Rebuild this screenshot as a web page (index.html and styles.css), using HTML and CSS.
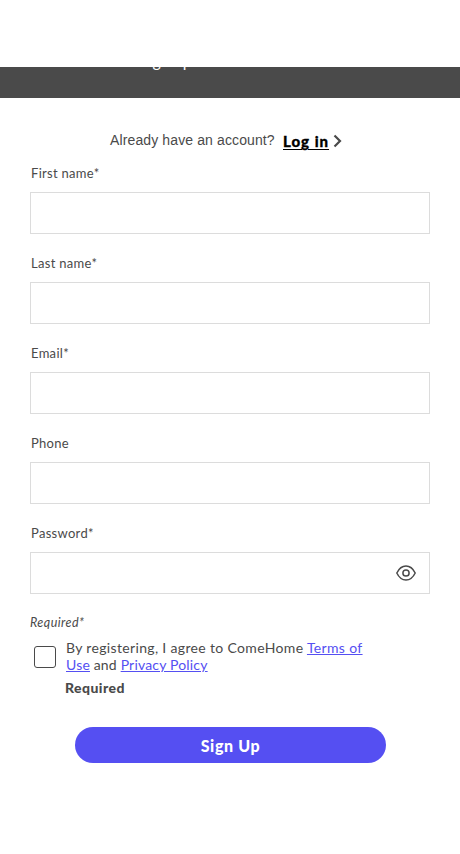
FILE: index.html
```html
<!DOCTYPE html>
<html lang="en">
<head>
<meta charset="utf-8">
<title>Sign Up</title>
<link rel="stylesheet" href="styles.css">
</head>
<body>
<header class="banner"><span class="banner-text">Sign up</span></header>
<main class="page">
  <p class="login"><span class="prompt">Already have an account?</span><a class="login-link" href="#">Log in</a><svg class="chevron" width="9" height="14" viewBox="0 0 9 14"><path d="M1.500 1.500 7 7l-5.500 5.500"/></svg></p>
  <form>
    <div class="field"><label for="first">First name*</label><input id="first" type="text"></div>
    <div class="field"><label for="last">Last name*</label><input id="last" type="text"></div>
    <div class="field"><label for="email">Email*</label><input id="email" type="email"></div>
    <div class="field"><label for="phone">Phone</label><input id="phone" type="tel"></div>
    <div class="field"><label for="password">Password*</label>
      <div class="password"><input id="password" type="password"><svg class="eye" width="20" height="16" viewBox="0 0 20 16"><path d="M.8 8C3 3.500 6.200 1 10 1s7 2.500 9.200 7C17 12.500 13.800 15 10 15S3 12.500.8 8Z"/><circle cx="10" cy="8" r="3.100"/></svg></div>
    </div>
    <p class="note">Required*</p>
    <div class="consent">
      <input class="check" type="checkbox" aria-label="Agree">
      <div class="terms"><div class="line-one">By registering, I agree to ComeHome <a href="#">Terms of</a></div><div class="line-two"><a href="#">Use</a> and <a href="#">Privacy Policy</a></div><div class="required">Required</div></div>
    </div>
    <button class="submit" type="button">Sign Up</button>
  </form>
</main>
</body>
</html>
```
FILE: styles.css
```css
* { box-sizing: border-box; }
body { margin: 0; padding-top: 67px; background: #fff; color: #4a4a4a; font-family: Lato, sans-serif; }
.banner { height: 31px; background: #4a4a4a; overflow: hidden; color: #fff; font-size: 16px; line-height: 22px; }
.banner-text { display: block; margin: -17px 0 0 140px; }
.page { padding: 0 30px; }
.login { display: flex; align-items: center; height: 20px; margin: 32px 0 13px 80px; white-space: nowrap; }
.prompt { width: 173px; font: 14px/20px "Liberation Sans", sans-serif; letter-spacing: .12px; }
.login-link { width: 46px; margin-top: 2px; color: #000; font-size: 15px; font-weight: 900; line-height: 20px; letter-spacing: 1px; text-underline-offset: 2px; -webkit-text-stroke: .3px #000; }
.chevron { margin: 1px 0 0 4px; fill: none; stroke: #4a4a4a; stroke-width: 2.200; }
.field { height: 90px; }
.field label { display: block; height: 29px; padding-left: 1px; font-size: 13px; line-height: 20px; letter-spacing: .3px; }
.field input { display: block; width: 400px; height: 42px; border: 1px solid #dcdcdc; border-radius: 0; padding: 0 12px; background: #fff; outline: 0; }
.password { display: flex; align-items: center; }
.eye { flex: none; margin-left: -34px; fill: none; stroke: #4a4a4a; stroke-width: 1.500; }
.note { margin: 0; font-size: 12.500px; font-style: italic; line-height: 20px; letter-spacing: .45px; }
.consent { display: flex; margin-top: 6px; }
.check { appearance: none; width: 22px; height: 22px; margin: 7px 10px 0 4px; border: 1px solid #4a4a4a; border-radius: 3px; background: #fff; }
.terms { font-size: 14px; line-height: 17px; white-space: nowrap; }
.line-one { letter-spacing: .34px; }
.line-two { letter-spacing: .18px; }
.terms a { color: #554ff2; text-underline-offset: 1px; }
.required { margin: 6px 0 0 -1px; font-weight: 900; font-size: 14px; letter-spacing: .45px; }
.submit { display: block; width: 311px; height: 36px; margin: 31px 0 0 45px; padding: 1px 0 0; border: 0; border-radius: 18px; background: #554ff2; color: #fff; font: 900 16px Lato, sans-serif; letter-spacing: .65px; }
```
